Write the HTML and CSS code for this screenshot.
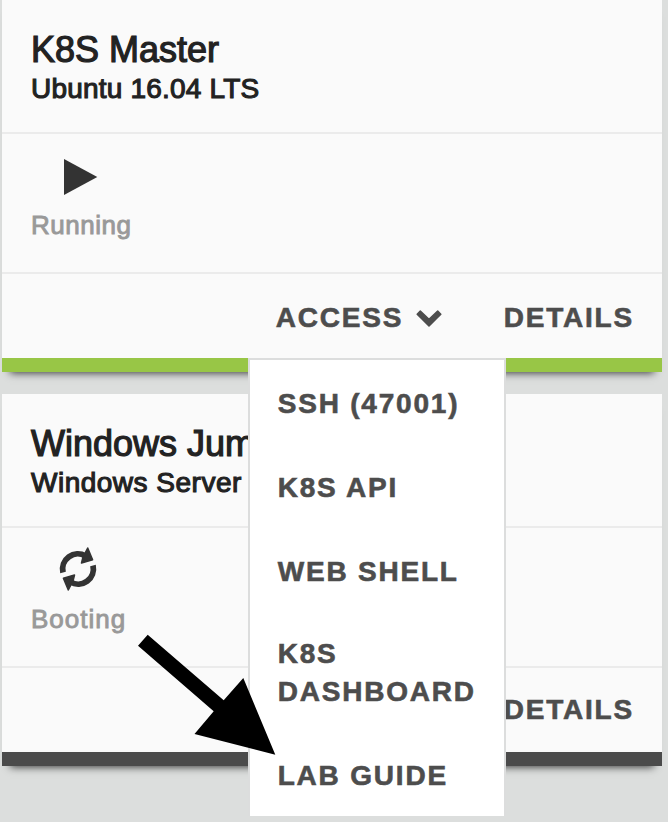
FILE: index.html
```html
<!DOCTYPE html>
<html lang="en">
<head>
<meta charset="utf-8">
<title>Lab machines</title>
<link rel="stylesheet" href="styles.css">
</head>
<body>
<main class="machines">
  <section class="card card-running">
    <header class="card-header">
      <h2 class="name">K8S Master</h2>
      <p class="os">Ubuntu 16.04 LTS</p>
    </header>
    <div class="card-status">
      <svg class="status-icon" viewBox="0 0 40 46"><path d="M6 5L39.300 23L6 41z"/></svg>
      <span class="status-text">Running</span>
    </div>
    <footer class="card-actions">
      <div class="dropdown">
        <a class="action">ACCESS<svg class="chevron" viewBox="0 0 26 18"><path d="M4.300 2.100L13 10.200L21.700 2.100L24.800 5.300L13 17L1.200 5.300z"/></svg></a>
        <ul class="menu">
          <li class="item">SSH (47001)</li>
          <li class="item">K8S API</li>
          <li class="item">WEB SHELL</li>
          <li class="item item-tall">K8S DASHBOARD</li>
          <li class="item">LAB GUIDE</li>
        </ul>
      </div>
      <a class="action">DETAILS</a>
    </footer>
  </section>
  <section class="card card-booting">
    <header class="card-header">
      <h2 class="name">Windows Jump</h2>
      <p class="os">Windows Server</p>
    </header>
    <div class="card-status">
      <svg class="status-icon" viewBox="0 0 40 46">
        <g id="half">
          <path class="arc" d="M5 24.500A15.200 15.200 0 0 1 27.500 8"/>
          <path class="head" d="M29.700 0L34.600 11.700L23.500 15L25 9z"/>
        </g>
        <use href="#half" transform="rotate(180 20 21)"/>
      </svg>
      <span class="status-text">Booting</span>
    </div>
    <footer class="card-actions">
      <a class="action">DETAILS</a>
    </footer>
  </section>
</main>
<svg class="pointer" viewBox="0 0 140 122"><path d="M12.700 2.700L3 13.700L78.700 79.300L59.500 102L140.300 122.700L108.300 46L88.700 68.300z"/></svg>
</body>
</html>
```
FILE: styles.css
```css
* { box-sizing: border-box; }
body {
  margin: 0;
  height: 822px;
  overflow: hidden;
  position: relative;
  background: #dcdedd;
  font-family: "Liberation Sans", Arial, sans-serif;
}
.machines {
  display: flex;
  flex-direction: column;
  gap: 22px;
  width: 662px;
  padding-left: 2px;
}
.card {
  height: 372px;
  background: #fafafa;
  border-bottom: 14px solid #98c646;
  box-shadow: 0 9px 8px -8px rgba(0, 0, 0, .75);
}
.card-running { position: relative; z-index: 1; }
.card-booting { border-bottom-color: #4b4b4b; }
.card-header {
  height: 134px;
  padding: 30px 29px 0;
  border-bottom: 2px solid #ebebeb;
  color: #222;
}
.name, .os {
  margin: 0;
  font-weight: 400;
  white-space: nowrap;
}
.name {
  font-size: 36px;
  line-height: 40px;
  -webkit-text-stroke: 1.2px #222;
}
.os {
  font-size: 28px;
  line-height: 37px;
  letter-spacing: .2px;
  -webkit-text-stroke: 1.100px #222;
}
.card-booting .os { letter-spacing: .5px; }
.card-status {
  display: flex;
  flex-direction: column;
  align-items: flex-start;
  height: 140px;
  padding: 20px 29px 0;
  border-bottom: 2px solid #ebebeb;
}
.status-icon {
  width: 40px;
  height: 46px;
  margin-left: 27px;
  fill: #333;
  overflow: visible;
}
.arc { fill: none; stroke: #333; stroke-width: 5.800px; }
.head { stroke: #333; stroke-width: 1.500px; stroke-linejoin: round; }
.status-text {
  margin-top: 9px;
  color: #999;
  font-size: 26px;
  line-height: 32px;
  letter-spacing: .5px;
  -webkit-text-stroke: .9px #999;
}
.card-booting .status-text { letter-spacing: 1px; }
.card-actions {
  display: flex;
  justify-content: flex-end;
  gap: 62px;
  height: 84px;
  padding-right: 28px;
}
.action {
  display: flex;
  align-items: center;
  color: #4d4d4d;
  font-size: 28px;
  font-weight: 700;
  line-height: 88px;
  height: 88px;
  letter-spacing: 1.8px;
  -webkit-text-stroke: .6px #4d4d4d;
}
.card-booting .action { height: 84px; line-height: 84px; }
.chevron {
  width: 26px;
  height: 18px;
  margin-left: 12.500px;
}
.chevron path { fill: #4d4d4d; stroke: #4d4d4d; stroke-width: 1.500px; stroke-linejoin: round; }
.dropdown { position: relative; }
.menu {
  position: absolute;
  top: 84px;
  right: -64px;
  width: 258px;
  margin: 0;
  padding: 0;
  list-style: none;
  background: #fff;
  border: 2px solid #dcdddd;
  border-bottom: 0;
}
.item {
  height: 84px;
  padding: 25px 22px 0 28px;
  color: #4d4d4d;
  font-size: 28px;
  font-weight: 700;
  line-height: 38px;
  letter-spacing: 1.8px;
  -webkit-text-stroke: .6px #4d4d4d;
}
.item-tall { height: 120px; padding-top: 23px; }
.pointer {
  position: absolute;
  left: 135px;
  top: 632px;
  z-index: 2;
  width: 140px;
  height: 122px;
  overflow: visible;
}
```
